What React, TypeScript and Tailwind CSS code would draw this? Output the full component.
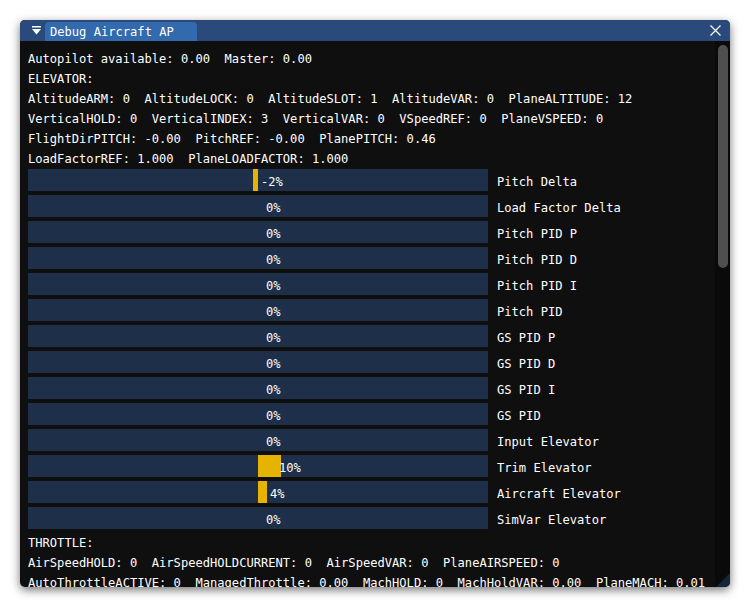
const lines = [
  'Autopilot available: 0.00  Master: 0.00',
  'ELEVATOR:',
  'AltitudeARM: 0  AltitudeLOCK: 0  AltitudeSLOT: 1  AltitudeVAR: 0  PlaneALTITUDE: 12',
  'VerticalHOLD: 0  VerticalINDEX: 3  VerticalVAR: 0  VSpeedREF: 0  PlaneVSPEED: 0',
  'FlightDirPITCH: -0.00  PitchREF: -0.00  PlanePITCH: 0.46',
  'LoadFactorREF: 1.000  PlaneLOADFACTOR: 1.000',
];

const throttle = [
  'THROTTLE:',
  'AirSpeedHOLD: 0  AirSpeedHOLDCURRENT: 0  AirSpeedVAR: 0  PlaneAIRSPEED: 0',
  'AutoThrottleACTIVE: 0  ManagedThrottle: 0.00  MachHOLD: 0  MachHoldVAR: 0.00  PlaneMACH: 0.01',
];

// value is percent of half the bar, textX is where the overlay starts (from bar left)
const bars = [
  { label: 'Pitch Delta', value: -2, textX: 233 },
  { label: 'Load Factor Delta', value: 0, textX: 238 },
  { label: 'Pitch PID P', value: 0, textX: 238 },
  { label: 'Pitch PID D', value: 0, textX: 238 },
  { label: 'Pitch PID I', value: 0, textX: 238 },
  { label: 'Pitch PID', value: 0, textX: 238 },
  { label: 'GS PID P', value: 0, textX: 238 },
  { label: 'GS PID D', value: 0, textX: 238 },
  { label: 'GS PID I', value: 0, textX: 238 },
  { label: 'GS PID', value: 0, textX: 238 },
  { label: 'Input Elevator', value: 0, textX: 238 },
  { label: 'Trim Elevator', value: 10, textX: 251 },
  { label: 'Aircraft Elevator', value: 4, textX: 242 },
  { label: 'SimVar Elevator', value: 0, textX: 238 },
];

const BAR_W = 460;
const HALF = BAR_W / 2;

function Bar({ label, value, textX }: { label: string; value: number; textX: number }) {
  const w = Math.round((Math.abs(value) / 100) * HALF);
  const left = value < 0 ? HALF - w : HALF;
  return (
    <div className="flex items-center h-[22px] gap-[9px]">
      <div className="relative w-[460px] h-[22px] bg-[#1d2f49] shrink-0">
        {w > 0 && (
          <div className="absolute top-0 bottom-0 bg-[#e6b300]" style={{ left, width: w }} />
        )}
        <span className="absolute top-0 h-[22px] pt-[3px] flex items-center" style={{ left: textX }}>
          {value}%
        </span>
      </div>
      <span className="whitespace-pre h-[22px] pt-[3px] flex items-center">{label}</span>
    </div>
  );
}

export default function App() {
  return (
    <div className="w-[750px] h-[607px] bg-white pt-[20px] pl-[20px] overflow-hidden">
      <div
        className="w-[710px] h-[567px] rounded-[5px] overflow-hidden bg-[#0f0f0f] flex flex-col shadow-[0_3px_10px_rgba(0,0,0,0.55)] text-white text-[12.1px] leading-[16px]"
        style={{ fontFamily: '"DejaVu Sans Mono", "Liberation Mono", monospace' }}
      >
        {/* Title bar */}
        <div className="h-[21px] shrink-0 bg-[#294a7a] flex items-end relative">
          <div className="w-[25px] h-[21px] flex items-center justify-center">
            <svg width="9" height="9" viewBox="0 0 9 9" className="ml-[8px]">
              <rect x="0" y="0" width="9" height="1.5" fill="#ffffff" />
              <polygon points="0,3 9,3 4.5,8.5" fill="#ffffff" />
            </svg>
          </div>
          <div className="h-[19px] w-[152px] bg-[#3369ad] rounded-t-[4px] flex items-center pl-[5px] whitespace-pre">
            Debug Aircraft AP
          </div>
          <div className="flex-1" />
          <div className="w-[26px] h-[21px] flex items-center justify-center">
            <svg width="11" height="11" viewBox="0 0 11 11" className="mr-[4px]">
              <path d="M0.5 0.5 L10.5 10.5 M10.5 0.5 L0.5 10.5" stroke="#ffffff" strokeWidth="1.2" />
            </svg>
          </div>
        </div>

        {/* Body */}
        <div className="flex-1 flex min-h-0 relative">
          <div className="flex-1 min-w-0 overflow-hidden pl-[8px] pt-[10px]">
            <div className="flex flex-col gap-[4px]">
              {lines.map((l) => (
                <div key={l} className="h-[16px] whitespace-pre">
                  {l}
                </div>
              ))}
            </div>
            <div className="flex flex-col gap-[4px] mt-[2px]">
              {bars.map((b) => (
                <Bar key={b.label} {...b} />
              ))}
            </div>
            <div className="flex flex-col gap-[4px] mt-[6px]">
              {throttle.map((l) => (
                <div key={l} className="h-[16px] whitespace-pre">
                  {l}
                </div>
              ))}
            </div>
          </div>
          {/* Scrollbar */}
          <div className="w-[15px] shrink-0 bg-[#0a0a0a] pt-[4px] pl-[3px] pr-[2px]">
            <div className="h-[223px] rounded-full bg-[#4f4f4f]" />
          </div>
          {/* Resize grip */}
          <svg width="14" height="14" viewBox="0 0 14 14" className="absolute right-0 bottom-0">
            <polygon points="14,0 14,14 0,14" fill="rgba(66,150,250,0.2)" />
          </svg>
        </div>
      </div>
    </div>
  );
}
